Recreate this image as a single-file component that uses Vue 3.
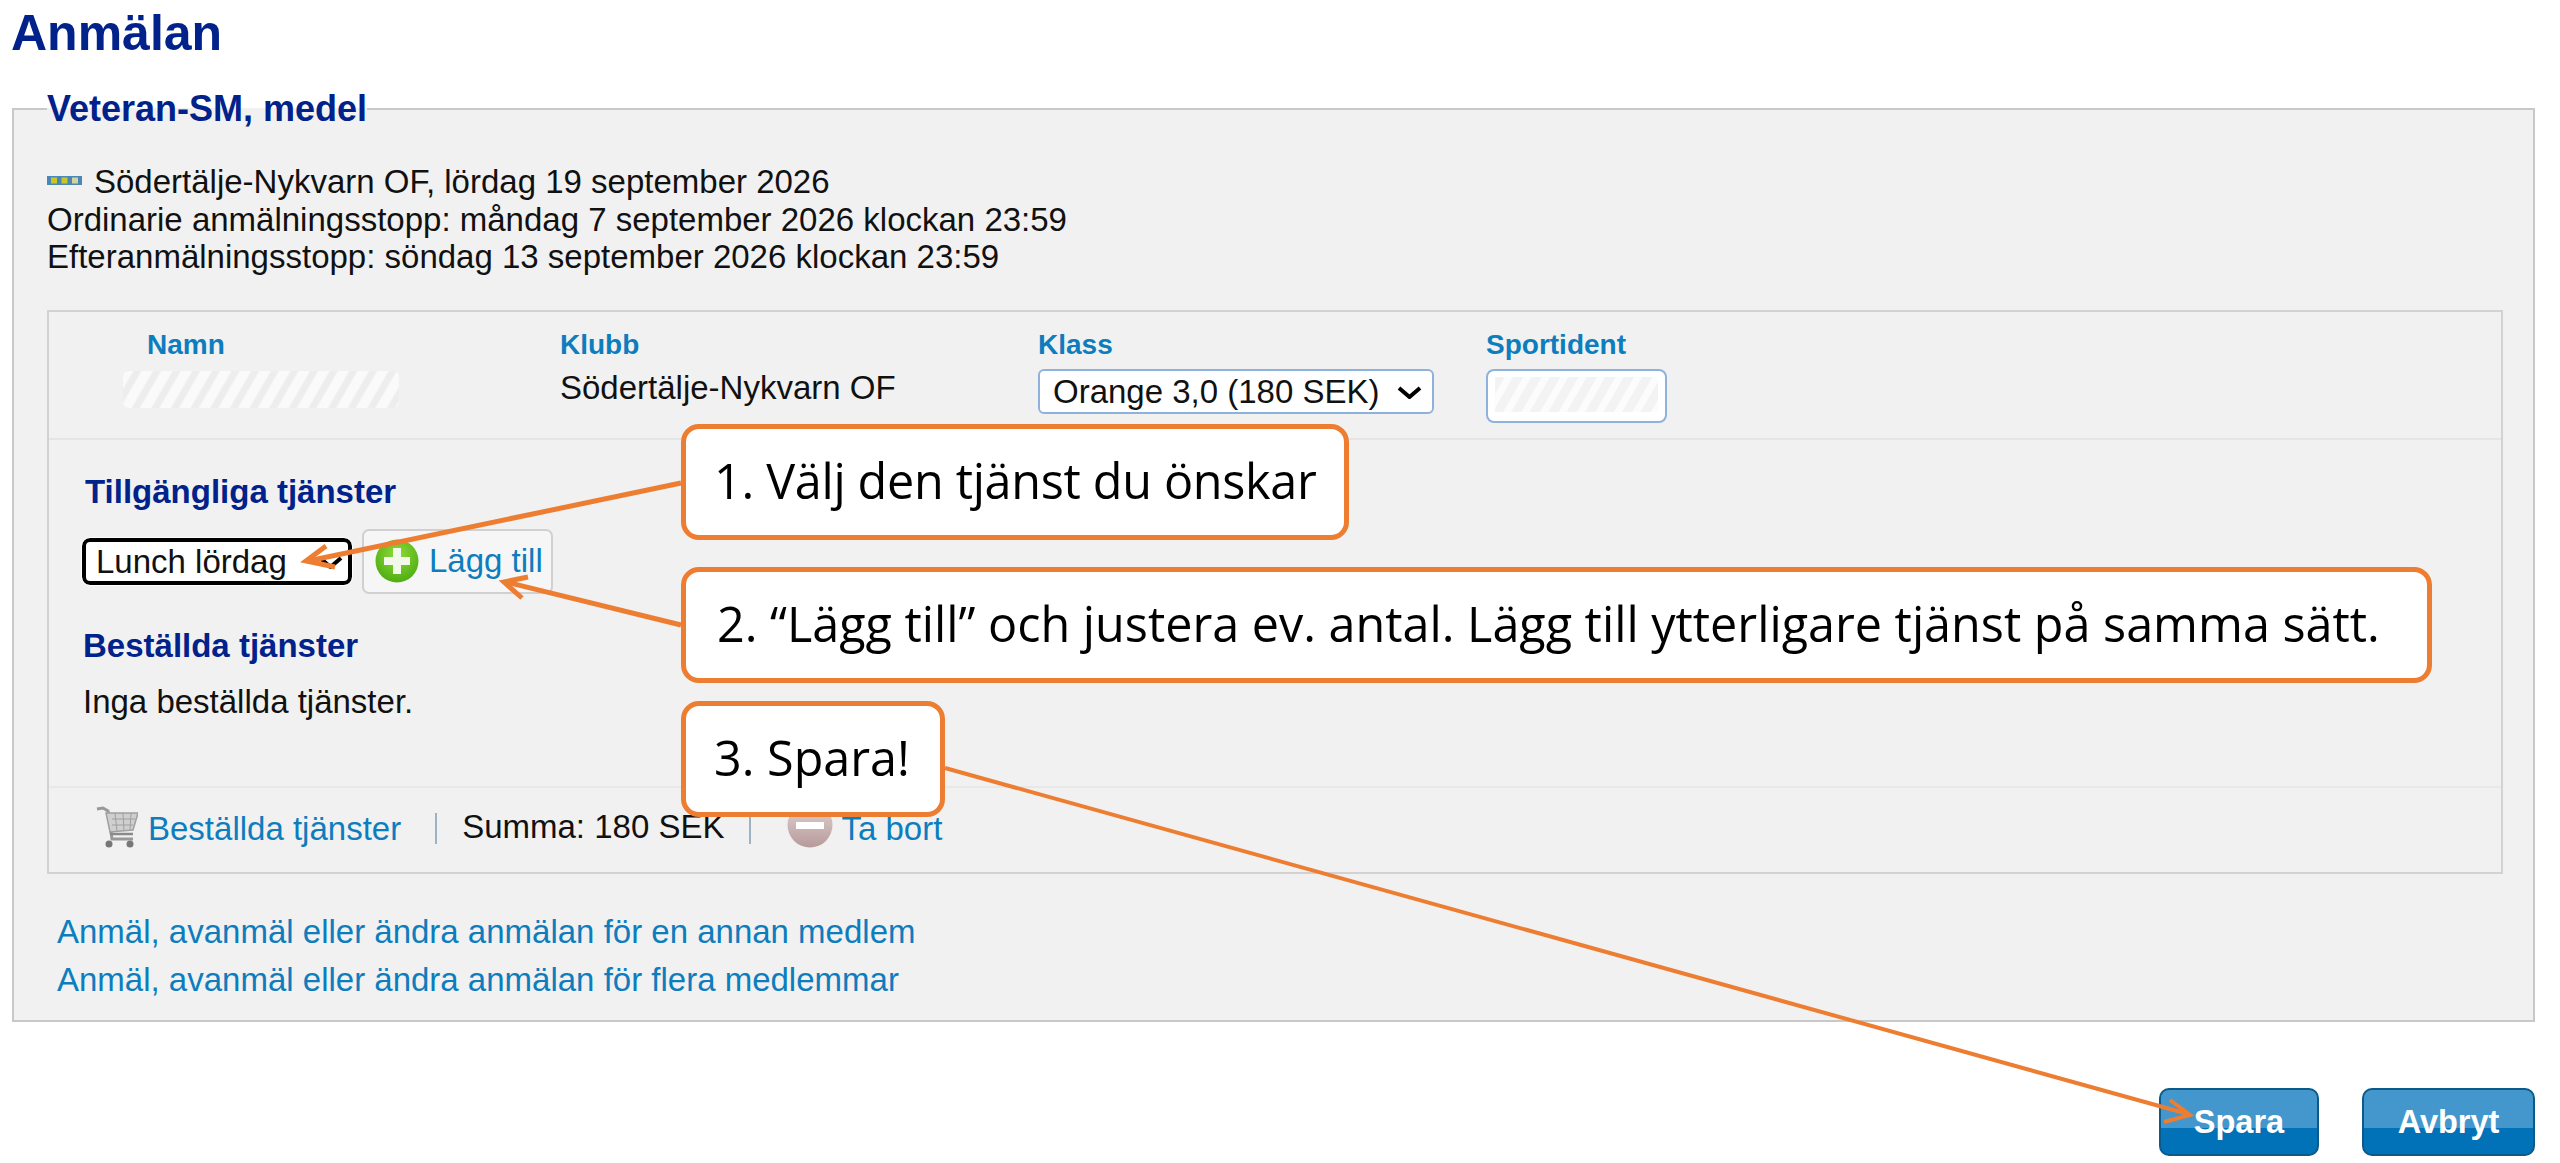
<script setup>
const arrows = [
  { line: 'M681 483 L308 561', head: 'M326 546 L306 561 L335 567', w: 5 },
  { line: 'M681 625 L506 582', head: 'M528 577 L504 582 L522 598', w: 5 },
  { line: 'M945 768 L2188 1114', head: 'M2170 1100 L2190 1115 L2164 1122', w: 4 }
]
const infoLines = [
  'Ordinarie anmälningsstopp: måndag 7 september 2026 klockan 23:59',
  'Efteranmälningsstopp: söndag 13 september 2026 klockan 23:59'
]
const links = [
  'Anmäl, avanmäl eller ändra anmälan för en annan medlem',
  'Anmäl, avanmäl eller ändra anmälan för flera medlemmar'
]
</script>

<template>
  <div class="page">
    <h1 class="title">Anmälan</h1>
    <fieldset class="panel">
      <legend class="panel-legend">Veteran-SM, medel</legend>
      <div class="info">
        <div class="info-first">
          <svg class="level" viewBox="0 0 35 9">
            <rect width="35" height="9" fill="#4c86b4" />
            <rect x="4" y="1.5" width="6" height="6" fill="#c9c62a" />
            <rect x="14.5" y="1.5" width="6" height="6" fill="#c9c62a" />
            <rect x="25" y="1.5" width="6" height="6" fill="#d3d3a0" />
          </svg>
          <span>Södertälje-Nykvarn OF, lördag 19 september 2026</span>
        </div>
        <div v-for="line in infoLines" :key="line">{{ line }}</div>
      </div>

      <div class="box">
        <div class="head">
          <div>
            <div class="label label-name">Namn</div>
            <div class="hatch-name"></div>
          </div>
          <div>
            <div class="label">Klubb</div>
            <div class="club">Södertälje-Nykvarn OF</div>
          </div>
          <div>
            <div class="label">Klass</div>
            <div class="class-select">
              <span>Orange 3,0 (180 SEK)</span>
              <svg class="chev chev-class" viewBox="0 0 25 13"><path d="M2 2 L12.5 11 L23 2" fill="none" stroke="#000" stroke-width="4" /></svg>
            </div>
          </div>
          <div>
            <div class="label">Sportident</div>
            <div class="si-input"><div class="si-hatch"></div></div>
          </div>
        </div>

        <div class="services">
          <div class="subhead">Tillgängliga tjänster</div>
          <div class="service-row">
            <div class="service-select">
              <span>Lunch lördag</span>
              <svg class="chev chev-service" viewBox="0 0 25 13"><path d="M2 2 L12.5 11 L23 2" fill="none" stroke="#000" stroke-width="4" /></svg>
            </div>
            <div class="add-btn">
              <svg class="plus" viewBox="0 0 44 44">
                <defs>
                  <radialGradient id="pg" cx="50%" cy="35%" r="70%">
                    <stop offset="0" stop-color="#8fdc3a" />
                    <stop offset="1" stop-color="#4aa90f" />
                  </radialGradient>
                </defs>
                <circle cx="22" cy="22" r="21.5" fill="url(#pg)" />
                <path d="M18 9h8v9h9v8h-9v9h-8v-9H9v-8h9z" fill="#f2f8ea" />
              </svg>
              <span>Lägg till</span>
            </div>
          </div>
          <div class="subhead subhead-ordered">Beställda tjänster</div>
          <div class="none">Inga beställda tjänster.</div>
        </div>

        <div class="foot">
          <svg class="cart" viewBox="0 0 43 42">
            <path d="M2 3 L8 2 L13 5 L17 33 L38 33" fill="none" stroke="#999" stroke-width="3" />
            <path d="M11 7 H43 L38 24 L15 26 Z" fill="#cfcfcf" stroke="#a0a0a0" stroke-width="1.5" />
            <path d="M17 13 H40 M17 19 H38 M20 7 L22 25 M28 7 L29 25 M36 7 L35 24" stroke="#a0a0a0" stroke-width="1" fill="none" />
            <path d="M15 28 L38 28" stroke="#8a8a8a" stroke-width="2.5" />
            <circle cx="14" cy="38" r="3.5" fill="#777" />
            <circle cx="35" cy="38" r="3.5" fill="#777" />
          </svg>
          <a class="link foot-ordered">Beställda tjänster</a>
          <i class="divider div-first"></i>
          <span class="sum">Summa: 180 SEK</span>
          <i class="divider div-second"></i>
          <svg class="remove" viewBox="0 0 46 46">
            <defs>
              <linearGradient id="rg" x1="0" y1="0" x2="0" y2="1">
                <stop offset="0" stop-color="#e4d4d4" />
                <stop offset="1" stop-color="#b79a9a" />
              </linearGradient>
            </defs>
            <circle cx="23" cy="23" r="22.5" fill="url(#rg)" />
            <rect x="9" y="20" width="28" height="7" fill="#fff" />
          </svg>
          <a class="link foot-remove">Ta bort</a>
        </div>
      </div>

      <div class="more">
        <a v-for="l in links" :key="l" class="link more-link">{{ l }}</a>
      </div>
    </fieldset>

    <div class="actions">
      <button class="btn btn-save">Spara</button>
      <button class="btn btn-cancel">Avbryt</button>
    </div>

    <div class="callout c1">1. Välj den tjänst du önskar</div>
    <div class="callout c2">2. “Lägg till” och justera ev. antal. Lägg till ytterligare tjänst på samma sätt.</div>
    <div class="callout c3">3. Spara!</div>

    <svg class="arrows" viewBox="0 0 2560 1163">
      <g v-for="a in arrows" :key="a.line" fill="none" stroke="#ed7d31" :stroke-width="a.w">
        <path :d="a.line" />
        <path :d="a.head" />
      </g>
    </svg>
  </div>
</template>

<style>
html, body { margin: 0; background: #fff; }
</style>

<style scoped>
.page {
  position: relative;
  width: 2560px;
  height: 1163px;
  overflow: hidden;
  background: #fff;
  color: #111;
  font-family: "Liberation Sans", Arial, sans-serif;
  font-size: 33px;
  box-sizing: border-box;
}
.title {
  margin: 0 0 26px;
  padding: 3px 0 0 11px;
  font-size: 50px;
  line-height: 60px;
  font-weight: 700;
  color: #00228a;
}
.panel {
  box-sizing: border-box;
  margin: 0 25px 0 12px;
  padding: 0 30px 0 33px;
  min-inline-size: 0;
  height: 933px;
  border: 2px solid #c8c8c8;
  background: #f1f1f1;
}
.panel-legend {
  padding: 0;
  font-size: 36px;
  line-height: 40px;
  font-weight: 700;
  color: #00228a;
}
.info {
  margin-top: 34px;
  line-height: 37.5px;
}
.info-first {
  display: flex;
  align-items: center;
  gap: 12px;
}
.level {
  width: 35px;
  height: 9px;
  margin-top: -2px;
}
.box {
  margin-top: 34px;
  border: 2px solid #d2d2d2;
}
.head {
  display: grid;
  grid-template-columns: 437px 478px 448px auto;
  height: 128px;
  box-sizing: border-box;
  padding: 16px 0 0 74px;
  border-bottom: 2px solid #e5e5e5;
}
.label {
  font-size: 28px;
  line-height: 34px;
  font-weight: 700;
  color: #0d7dbd;
}
.label-name { margin-left: 24px; }
.hatch-name {
  width: 276px;
  height: 37px;
  margin-top: 9px;
  border-radius: 6px;
  background: repeating-linear-gradient(120deg, #fafafa 0 8px, #ededed 10px 15px, #fafafa 17px);
}
.club {
  margin-top: 7px;
  line-height: 37.5px;
}
.class-select {
  position: relative;
  box-sizing: border-box;
  width: 396px;
  height: 45px;
  margin-top: 7px;
  padding-left: 13px;
  border: 2px solid #8fb2dc;
  border-radius: 6px;
  background: #fff;
  line-height: 41px;
  white-space: nowrap;
}
.chev {
  position: absolute;
  width: 25px;
  height: 13px;
}
.chev-class { left: 357px; top: 15px; }
.si-input {
  box-sizing: border-box;
  width: 181px;
  height: 54px;
  margin-top: 7px;
  padding: 6px 7px 9px;
  border: 2px solid #8fb2dc;
  border-radius: 8px;
  background: #fff;
}
.si-hatch {
  height: 100%;
  background: repeating-linear-gradient(120deg, #f3f3f3 0 8px, #fcfcfc 9px 15px, #f3f3f3 16px);
}
.services {
  height: 348px;
  box-sizing: border-box;
  padding: 33px 0 0 36px;
  border-bottom: 2px solid #e8e8e8;
}
.subhead {
  font-size: 33px;
  line-height: 38px;
  font-weight: 700;
  color: #00228a;
}
.subhead-ordered { margin: 33px 0 0 -2px; }
.service-row {
  display: flex;
  align-items: center;
  gap: 10px;
  height: 65px;
  margin: 18px 0 0 -3px;
}
.service-select {
  position: relative;
  box-sizing: border-box;
  width: 270px;
  height: 47px;
  padding-left: 10px;
  border: 4px solid #000;
  border-radius: 8px;
  background: #fff;
  outline: 1px solid #fff;
  line-height: 39px;
  white-space: nowrap;
}
.chev-service { left: 232px; top: 14px; }
.add-btn {
  display: flex;
  align-items: center;
  gap: 10px;
  box-sizing: border-box;
  width: 191px;
  height: 65px;
  padding-left: 11px;
  border: 2px solid #d0d0d0;
  border-radius: 7px;
  background: #f6f6f6;
  color: #0d7dbd;
  white-space: nowrap;
}
.plus {
  flex: none;
  width: 44px;
  height: 44px;
  filter: blur(0.5px);
}
.none {
  margin: 18px 0 0 -2px;
  line-height: 38px;
}
.foot {
  display: flex;
  align-items: center;
  height: 84px;
  box-sizing: border-box;
  padding: 0 0 2px 46px;
}
.cart {
  flex: none;
  width: 43px;
  height: 42px;
  margin-top: -3px;
  filter: blur(0.6px);
}
.link {
  color: #0d7dbd;
}
.foot-ordered { margin-left: 10px; }
.divider {
  flex: none;
  width: 2px;
  height: 31px;
  background: #9db3c4;
}
.div-first { margin-left: 34px; }
.sum {
  margin-left: 25px;
  margin-bottom: 4px;
}
.div-second { margin-left: 25px; }
.remove {
  flex: none;
  width: 46px;
  height: 46px;
  margin: 0 0 8px 36px;
  filter: blur(0.6px);
}
.foot-remove { margin-left: 8px; }
.more {
  display: flex;
  flex-direction: column;
  margin: 34px 0 0 10px;
  line-height: 48px;
}
.actions {
  display: flex;
  justify-content: flex-end;
  gap: 43px;
  margin-top: 66px;
  padding-right: 25px;
}
.btn {
  box-sizing: border-box;
  height: 68px;
  padding: 0;
  border: 2px solid #0b5a8a;
  border-radius: 10px;
  background: linear-gradient(#4397cc 0 59%, #0272b8 59% 100%);
  color: #fff;
  font: 700 32.5px "Liberation Sans", Arial, sans-serif;
}
.btn-save { width: 160px; }
.btn-cancel { width: 173px; }
.callout {
  position: absolute;
  left: 681px;
  box-sizing: border-box;
  display: flex;
  align-items: center;
  border: 5px solid #ed7d31;
  border-radius: 18px;
  background: #fff;
  color: #000;
  font-family: "Open Sans", "Liberation Sans", sans-serif;
  font-size: 48.5px;
  white-space: nowrap;
}
.c1 { top: 424px; width: 668px; height: 116px; padding: 0 0 5px 28px; letter-spacing: -0.3px; }
.c2 { top: 567px; width: 1751px; height: 116px; padding: 0 0 5px 31px; }
.c3 { top: 701px; width: 264px; height: 116px; padding: 0 0 5px 28px; }
.arrows {
  position: absolute;
  left: 0;
  top: 0;
  width: 2560px;
  height: 1163px;
  pointer-events: none;
}
</style>
